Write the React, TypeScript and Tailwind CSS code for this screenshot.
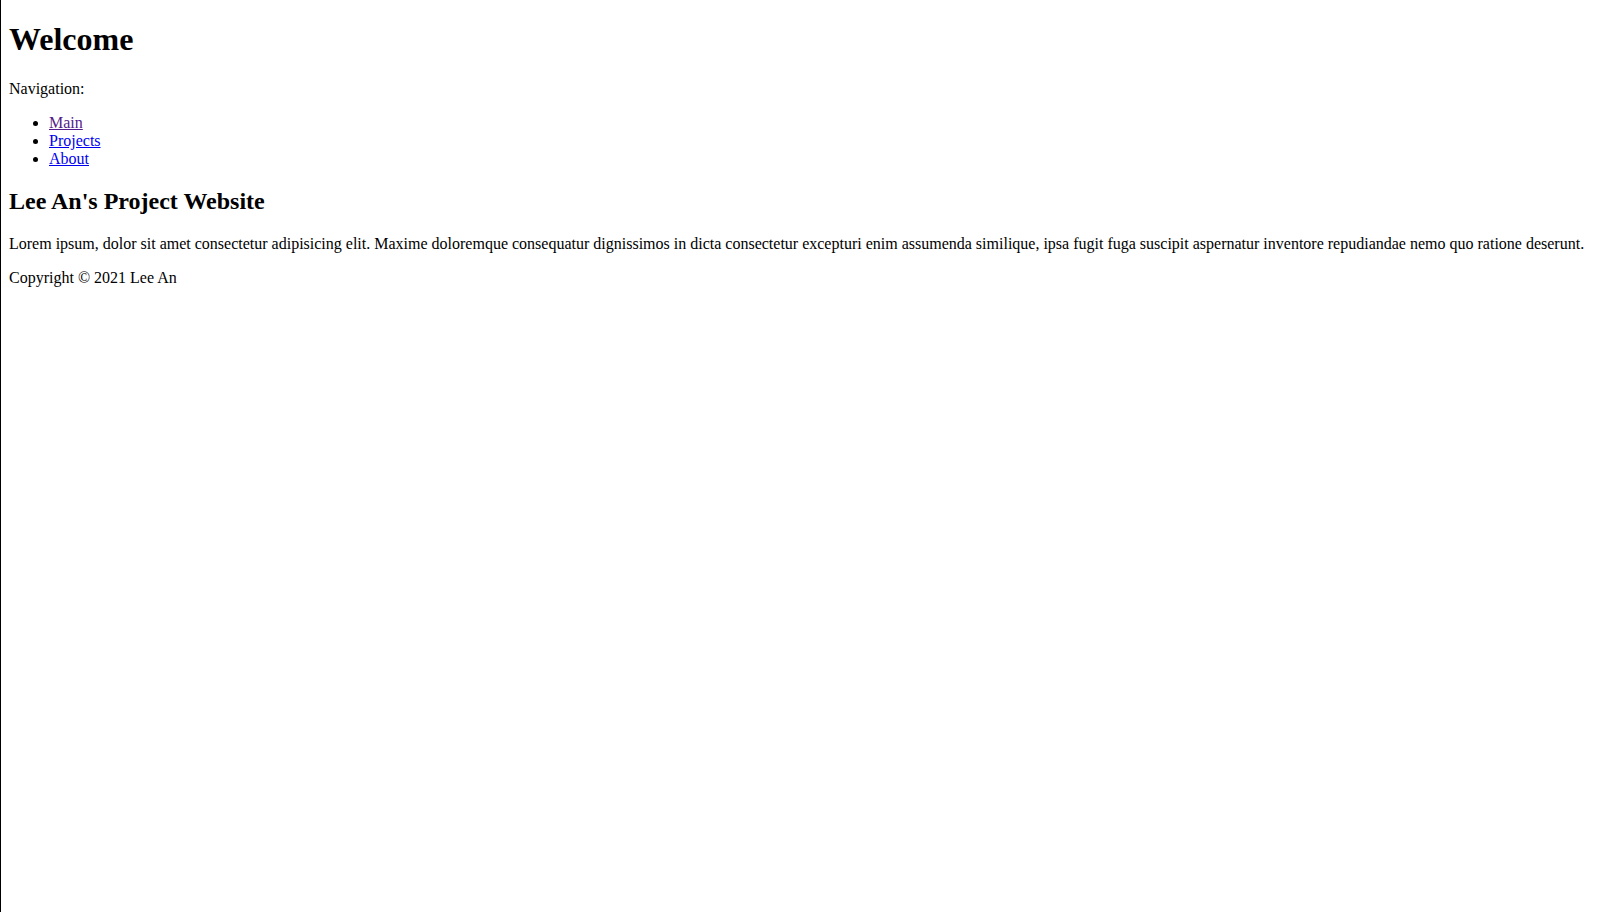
export default function App() {
  return (
    <div className="min-h-screen border-l border-black bg-white px-2 text-[16px] leading-[normal] text-black [font-family:'Liberation_Serif','Times_New_Roman',serif]">
      <div className="flow-root -mt-px pt-px">
        <h1 className="my-[21.44px] text-[32px] font-bold">Welcome</h1>
        <p className="my-4">Navigation:</p>
        <ul className="my-4 list-disc pl-10">
          <li>
            <a href="#" className="text-[#551a8b] underline">
              Main
            </a>
          </li>
          <li>
            <a href="#" className="text-[#0000ee] underline">
              Projects
            </a>
          </li>
          <li>
            <a href="#" className="text-[#0000ee] underline">
              About
            </a>
          </li>
        </ul>
        <h2 className="my-[19.92px] text-[24px] font-bold">Lee An's Project Website</h2>
        <p className="my-4">
          Lorem ipsum, dolor sit amet consectetur adipisicing elit. Maxime doloremque consequatur
          dignissimos in dicta consectetur excepturi enim assumenda similique, ipsa fugit fuga
          suscipit aspernatur inventore repudiandae nemo quo ratione deserunt.
        </p>
        <p className="my-4">Copyright © 2021 Lee An</p>
      </div>
    </div>
  );
}
